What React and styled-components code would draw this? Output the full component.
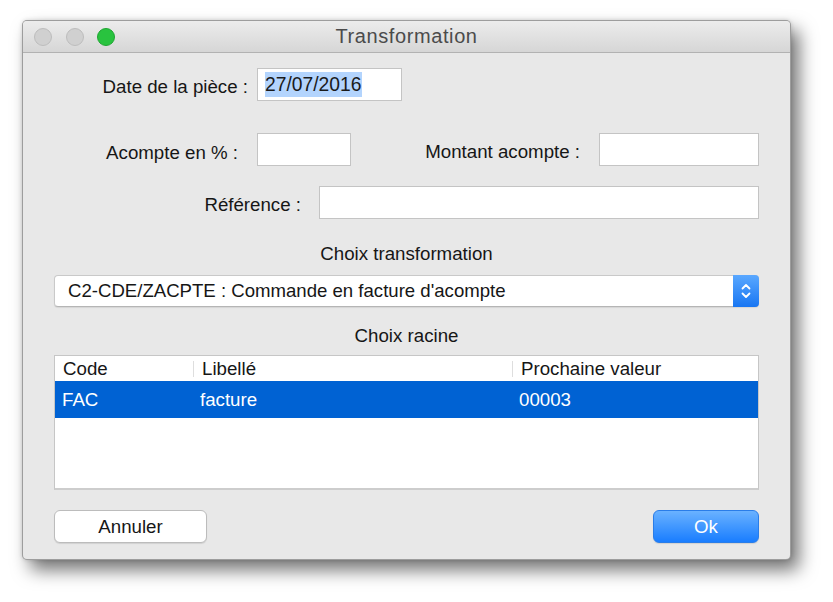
import React from 'react';
import styled, { createGlobalStyle } from 'styled-components';

const GlobalStyle = createGlobalStyle`
    body {
        margin: 0;
        background: #ffffff;
        font-family: "Liberation Sans", Arial, sans-serif;
    }
`;

function App() {
    return (
        <>
            <GlobalStyle />
            <Page>
                <Window>
                    <TitleBar>
                        <Lights>
                            <Light />
                            <Light />
                            <Light green />
                        </Lights>
                        <Title>Transformation</Title>
                        <span />
                    </TitleBar>
                    <Body>
                        <Row>
                            <Label width={194} space={9}>Date de la pièce :</Label>
                            <Field width={145}>
                                <Selected>27/07/2016</Selected>
                            </Field>
                        </Row>
                        <Row top={32}>
                            <Label width={184} space={19} drop={6}>Acompte en % :</Label>
                            <Field width={94} />
                            <Label width={229} space={19}>Montant acompte :</Label>
                            <Field width={160} />
                        </Row>
                        <Row top={20}>
                            <Label width={247} space={18}>Référence :</Label>
                            <Field grow />
                        </Row>
                        <Heading top={24}>Choix transformation</Heading>
                        <Select>
                            <SelectText>C2-CDE/ZACPTE : Commande en facture d'acompte</SelectText>
                            <Stepper>
                                <svg width="12" height="20" viewBox="0 0 12 20" fill="none"
                                    stroke="#fff" strokeWidth="1.8" strokeLinecap="round" strokeLinejoin="round">
                                    <path d="M2.5 7.5 L6 4 L9.5 7.5" />
                                    <path d="M2.5 12.5 L6 16 L9.5 12.5" />
                                </svg>
                            </Stepper>
                        </Select>
                        <Heading top={18}>Choix racine</Heading>
                        <Table>
                            <HeadRow>
                                <HeadCell>Code</HeadCell>
                                <HeadCell sep>Libellé</HeadCell>
                                <HeadCell sep>Prochaine valeur</HeadCell>
                            </HeadRow>
                            <DataRow selected>
                                <Cell>FAC</Cell>
                                <Cell>facture</Cell>
                                <Cell>00003</Cell>
                            </DataRow>
                        </Table>
                        <Buttons>
                            <Button width={153}>Annuler</Button>
                            <Button width={106} primary>Ok</Button>
                        </Buttons>
                    </Body>
                </Window>
            </Page>
        </>
    )
}

export default App

const Page = styled.div`
    width: 833px;
    height: 602px;
    padding: 20px 0 0 22px;
    box-sizing: border-box;
    overflow: hidden;
`;
const Window = styled.div`
    width: 769px;
    box-sizing: border-box;
    background: #e8e8e8;
    border: 1px solid rgba(0, 0, 0, 0.32);
    border-radius: 5px;
    box-shadow: 8px 10px 18px rgba(0, 0, 0, 0.55), 0 0 4px rgba(0, 0, 0, 0.15);
    overflow: hidden;
`;
const TitleBar = styled.div`
    height: 31px;
    display: grid;
    grid-template-columns: 1fr auto 1fr;
    align-items: center;
    background: linear-gradient(#ececec, #d6d6d6);
    border-bottom: 1px solid #b2b2b2;
`;
const Lights = styled.div`
    display: flex;
    gap: 13.5px;
    margin-left: 11px;
`;
const Light = styled.span`
    width: 16px;
    height: 16px;
    border-radius: 50%;
    background: ${p => p.green ? '#29c33f' : '#d0d0d0'};
    border: 1px solid ${p => p.green ? '#1ea631' : '#bdbdbd'};
`;
const Title = styled.div`
    font-size: 20px;
    letter-spacing: 0.6px;
    color: #4b4b4b;
`;
const Body = styled.div`
    padding: 15px 31px 16px 31px;
    display: flex;
    flex-direction: column;
    font-size: 18.7px;
    color: #161616;
`;
const Row = styled.div`
    display: flex;
    align-items: center;
    margin-top: ${p => p.top || 0}px;
`;
const Label = styled.div`
    width: ${p => p.width}px;
    margin-right: ${p => p.space}px;
    padding-top: ${p => p.drop || 4}px;
    text-align: right;
    white-space: nowrap;
    flex-shrink: 0;
`;
const Field = styled.div`
    height: 33px;
    box-sizing: border-box;
    width: ${p => p.grow ? 'auto' : p.width + 'px'};
    flex: ${p => p.grow ? 1 : 'none'};
    background: #ffffff;
    border: 1px solid #c4c4c4;
    display: flex;
    align-items: center;
    padding-left: 7px;
    font-size: 19.3px;
`;
const Selected = styled.span`
    background: #b3d4fd;
    line-height: 25px;
    color: #1a1a1a;
`;
const Heading = styled.div`
    margin-top: ${p => p.top}px;
    line-height: 22px;
    text-align: center;
`;
const Select = styled.div`
    margin-top: 10px;
    height: 32px;
    box-sizing: border-box;
    display: flex;
    background: #ffffff;
    border: 1px solid #c9c9c9;
    border-bottom-color: #b5b5b5;
    border-radius: 4px;
    box-shadow: 0 1px 1px rgba(0, 0, 0, 0.08);
`;
const SelectText = styled.div`
    flex: 1;
    display: flex;
    align-items: center;
    padding-left: 13px;
    font-size: 18.6px;
`;
const Stepper = styled.div`
    width: 26px;
    margin: -1px -1px -1px 0;
    border-radius: 0 4px 4px 0;
    background: linear-gradient(#5aa8ff, #1876f2);
    display: flex;
    align-items: center;
    justify-content: center;
`;
const Table = styled.div`
    margin-top: 8px;
    height: 135px;
    box-sizing: border-box;
    background: #ffffff;
    border: 1px solid #c6c6c6;
    border-bottom: 2px solid #cdcdcd;
`;
const HeadRow = styled.div`
    display: grid;
    grid-template-columns: 138px 319px 1fr;
    height: 25px;
`;
const HeadCell = styled.div`
    position: relative;
    display: flex;
    align-items: center;
    padding-left: ${p => p.sep ? 9 : 8}px;
    &::before {
        content: '';
        display: ${p => p.sep ? 'block' : 'none'};
        position: absolute;
        left: 0;
        top: 5px;
        bottom: 4px;
        width: 1px;
        background: #dedede;
    }
`;
const DataRow = styled.div`
    display: grid;
    grid-template-columns: 138px 319px 1fr;
    height: 37px;
    background: ${p => p.selected ? '#0062d3' : 'transparent'};
    color: ${p => p.selected ? '#ffffff' : 'inherit'};
`;
const Cell = styled.div`
    display: flex;
    align-items: center;
    padding-left: 7px;
`;
const Buttons = styled.div`
    margin-top: 20px;
    display: flex;
    justify-content: space-between;
`;
const Button = styled.div`
    width: ${p => p.width}px;
    height: 33px;
    box-sizing: border-box;
    border-radius: 6px;
    display: flex;
    align-items: center;
    justify-content: center;
    background: ${p => p.primary ? 'linear-gradient(#6ab2ff, #197dff)' : '#ffffff'};
    border: 1px solid ${p => p.primary ? '#2a7de8' : '#bcbcbc'};
    color: ${p => p.primary ? '#ffffff' : '#161616'};
    box-shadow: 0 1px 1px rgba(0, 0, 0, 0.1);
`;
